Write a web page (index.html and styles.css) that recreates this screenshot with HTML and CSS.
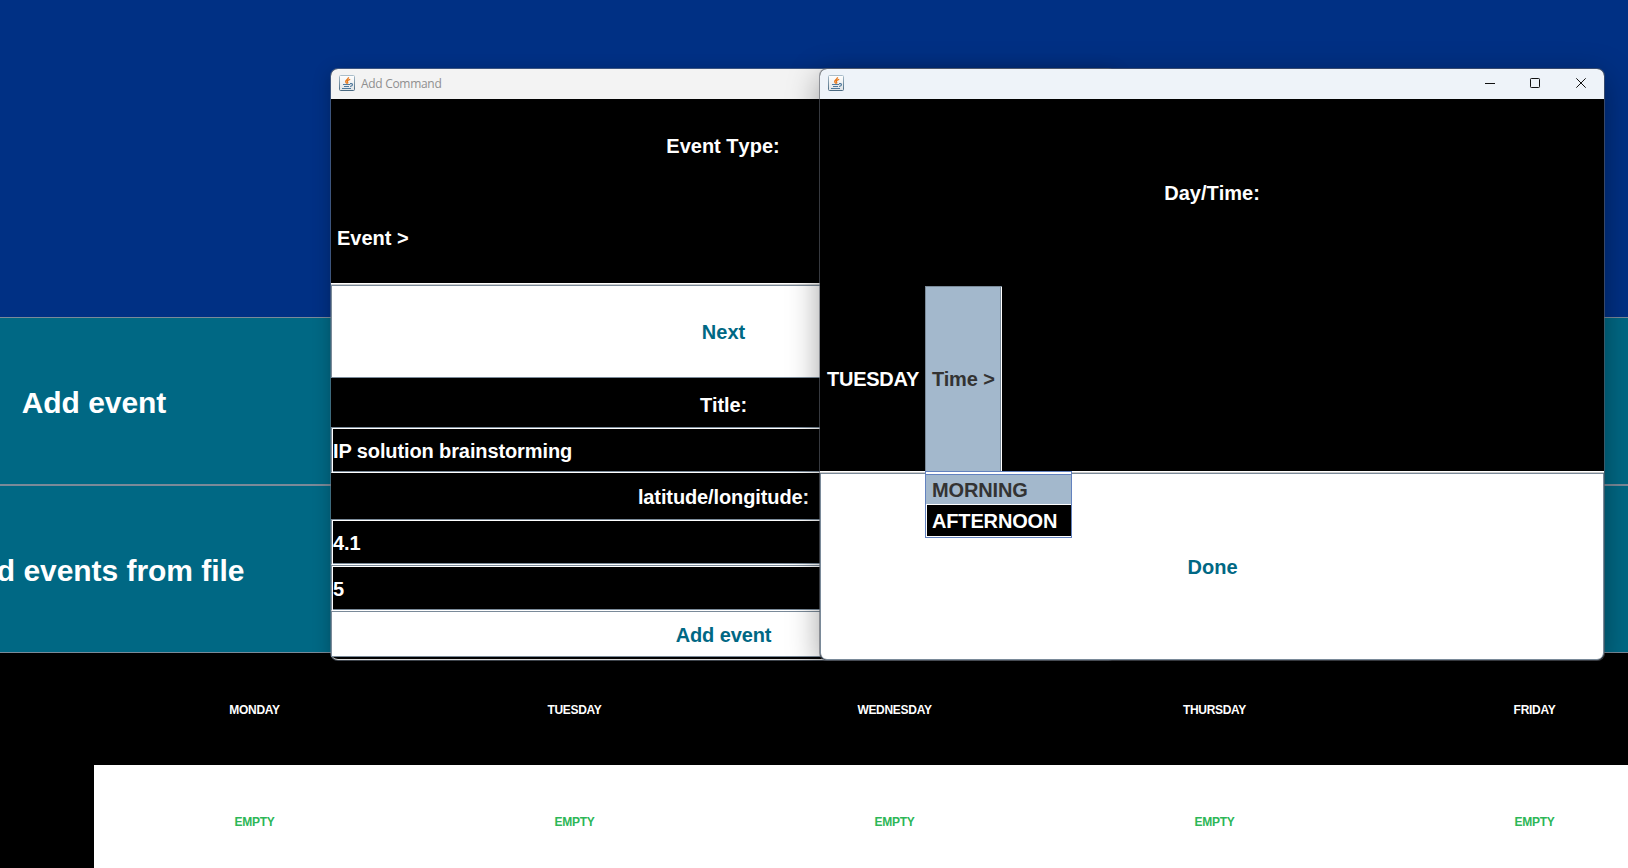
FILE: index.html
```html
<!DOCTYPE html>
<html lang="en">
<head>
<meta charset="utf-8">
<title>Add Command</title>
<link rel="stylesheet" href="styles.css">
</head>
<body>
<svg width="0" height="0" class="defs">
  <defs>
    <linearGradient id="face" x1="0" y1="0" x2="0" y2="1"><stop offset="0" stop-color="#fff"/><stop offset="1" stop-color="#dfe3e6"/></linearGradient>
    <linearGradient id="edge" x1="0" y1="0" x2="0" y2="1"><stop offset="0" stop-color="#a9bdca"/><stop offset="1" stop-color="#4a6a82"/></linearGradient>
  </defs>
  <symbol id="java" viewBox="0 0 16 16">
    <rect x=".5" y=".5" width="15" height="15" rx="1" fill="url(#face)" stroke="url(#edge)"/>
    <path d="M9.6 2.3C9.6 4.2 6.3 4.8 6.7 6.7 6.8 7.4 7.4 7.9 7.8 8.6M11.2 4.4C8.3 5.2 7.9 6.3 8.6 7.1 9 7.6 8.8 8.1 8.4 8.6" fill="none" stroke="#e8771a" stroke-width="1.3"/>
    <path d="M4 9.5h7M5 11.5h5M3 13.5h9M11 8.6h1.6q1.1.3.9 1.3-.3 1.2-2.5 1.6" fill="none" stroke="#50799c" stroke-width="1.2"/>
  </symbol>
</svg>
<main class="desktop">
  <div class="banner"></div>
  <div class="big-button"><span class="big-label">Add event</span></div>
  <div class="big-button"><span class="big-label">Load events from file</span></div>
  <div class="schedule">
    <div class="corner"></div>
    <div class="day">MONDAY</div><div class="day">TUESDAY</div><div class="day">WEDNESDAY</div><div class="day">THURSDAY</div><div class="day">FRIDAY</div>
    <div class="corner"></div>
    <div class="slot">EMPTY</div><div class="slot">EMPTY</div><div class="slot">EMPTY</div><div class="slot">EMPTY</div><div class="slot">EMPTY</div>
  </div>
</main>

<section class="window command">
  <header class="titlebar"><svg class="java"><use href="#java"/></svg><span class="title">Add Command</span></header>
  <div class="type-panel">
    <div class="label">Event Type:</div>
    <div class="menubar"><span class="menu">Event &gt;</span></div>
    <div class="button">Next</div>
  </div>
  <div class="form">
    <div class="label">Title:</div>
    <div class="field">IP solution brainstorming</div>
    <div class="label">latitude/longitude:</div>
    <div class="field">4.1</div>
    <div class="field">5</div>
    <div class="button">Add event</div>
  </div>
</section>

<section class="window daytime">
  <header class="titlebar"><svg class="java"><use href="#java"/></svg>
    <svg class="controls" width="102" height="12" viewBox="0 0 102 12" fill="none" stroke="#111">
      <path d="M0 6.5h10"/><rect x="45.5" y="1.5" width="9" height="9" rx=".8"/><path d="M91.3 1.3l9.4 9.4M100.7 1.3l-9.4 9.4"/>
    </svg>
  </header>
  <div class="time-panel">
    <div class="label">Day/Time:</div>
    <div class="menubar">
      <span class="menu">TUESDAY</span>
      <span class="menu selected">Time &gt;
        <span class="popup"><span class="item active">MORNING</span><span class="item">AFTERNOON</span></span>
      </span>
    </div>
    <div class="button">Done</div>
  </div>
</section>
</body>
</html>
```

FILE: styles.css
```css
* { box-sizing: border-box; }
body {
  margin: 0;
  width: 1628px;
  height: 868px;
  overflow: hidden;
  position: relative;
  background: #000;
  color: #fff;
  font: bold 20px/24px "Liberation Sans", Arial, sans-serif;
  white-space: nowrap;
}
.defs { position: absolute; }

.desktop { height: 868px; overflow: hidden; }
.banner { height: 317px; background: #003084; }
.big-button {
  height: 168px;
  padding-top: 3px;
  display: flex;
  align-items: center;
  background: #006884;
  border: solid #7a8a99;
  border-width: 1px 0;
  font-size: 30px;
}
.big-label { width: 188px; display: flex; justify-content: center; letter-spacing: -.05px; }
.schedule {
  display: grid;
  grid-template-columns: 94px repeat(5, 320px);
  grid-auto-rows: 112px;
  font-size: 12px;
  letter-spacing: -.3px;
}
.day, .slot { padding: 2px 0 0 1px; display: flex; align-items: center; justify-content: center; }
.slot { background: #fff; color: #2db757; }

.window {
  position: absolute;
  top: 69px;
  width: 784px;
  height: 591px;
  border-radius: 7px;
  background: #000;
}
.command { left: 331px; box-shadow: 0 0 0 1px rgba(110, 120, 135, .55), 0 4px 18px rgba(0, 0, 0, .28); border-bottom: 1px solid #d8d8d8; }
.daytime { left: 820px; box-shadow: 0 0 0 1px rgba(90, 95, 105, .6), 0 8px 32px rgba(0, 0, 0, .38); }
.titlebar {
  height: 30px;
  padding-left: 8px;
  display: flex;
  align-items: center;
  background: #f3f3f3;
  border-radius: 7px 7px 0 0;
}
.daytime .titlebar { background: #eef3f9; }
.java { width: 16px; height: 16px; margin-top: -2px; }
.title { margin: 0 0 0 6px; color: #8f8f8f; font: 12px/16px "Open Sans", "Noto Sans", sans-serif; letter-spacing: -.3px; }
.controls { margin: -2px 17px 0 auto; }

.label, .button { display: flex; align-items: center; justify-content: center; }
.label { font-kerning: none; }
.button { padding-left: 1px; background: #fff; color: #006884; border: 1px solid #7a8a99; }
.type-panel { display: grid; grid-template-rows: repeat(3, 93px); }
.time-panel { display: grid; grid-template-rows: repeat(3, 187px); }
.time-panel .button { border-radius: 0 0 7px 7px; }
.form { padding-top: 3px; display: grid; grid-template-rows: repeat(6, 46px); letter-spacing: -.11px; }
.form > * { padding-top: 2px; padding-left: 1px; }
.field {
  display: flex;
  align-items: center;
  border: 1px solid #7a8a99;
  border-bottom-color: #fff;
  box-shadow: inset 1px 1px #fff, inset 0 -1px #7a8a99;
}
.menubar { display: flex; border-bottom: 1px solid #ccc; box-shadow: inset 0 -1px #fff; }
.menu { display: flex; align-items: center; padding-left: 6px; }
.daytime .menu { width: 105px; padding-left: 7px; letter-spacing: -.25px; }
.daytime .selected {
  position: relative;
  width: 77px;
  padding-left: 6px;
  margin-bottom: 1px;
  background: #a3b8cc;
  color: #333;
  border: solid #7a8a99;
  border-width: 1px 0 0 1px;
  box-shadow: inset -1px 0 #fff, inset -2px 0 #7a8a99;
  letter-spacing: -.15px;
}
.popup {
  position: absolute;
  top: 184px;
  left: -1px;
  width: 147px;
  height: 67px;
  padding-top: 2px;
  border: 1px solid #6382bf;
  background: #fff;
  display: flex;
  flex-direction: column;
}
.item {
  height: 32px;
  padding-left: 5px;
  display: flex;
  align-items: center;
  background: #000;
  color: #fff;
  border: solid #fff;
  border-width: 0 0 1px 1px;
}
.active { height: 31px; padding-left: 6px; background: #a3b8cc; color: #333; border-top: 1px solid #6382bf; border-left: 0; }
```
